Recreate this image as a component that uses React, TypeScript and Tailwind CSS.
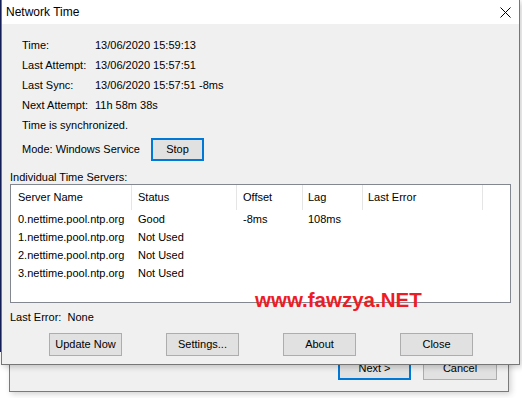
import React from "react";

const font = "font-['Liberation_Sans',Arial,sans-serif]";

function Btn({ label, focused = false, w = "w-[73px]" }: { label: string; focused?: boolean; w?: string }) {
  return (
    <div
      className={`${w} h-[23px] flex items-center justify-center bg-[#e1e1e1] text-[11px] text-black ${
        focused ? "border-2 border-[#0078d7]" : "border border-[#adadad]"
      }`}
    >
      {label}
    </div>
  );
}

const cols = [
  { w: "w-[121px]", pl: "pl-[7px]", title: "Server Name" },
  { w: "w-[105px]", pl: "pl-[6px]", title: "Status" },
  { w: "w-[66px]", pl: "pl-[6px]", title: "Offset" },
  { w: "w-[60px]", pl: "pl-[5px]", title: "Lag" },
  { w: "w-[120px]", pl: "pl-[5px]", title: "Last Error" },
];

const rows = [
  ["0.nettime.pool.ntp.org", "Good", "-8ms", "108ms", ""],
  ["1.nettime.pool.ntp.org", "Not Used", "", "", ""],
  ["2.nettime.pool.ntp.org", "Not Used", "", "", ""],
  ["3.nettime.pool.ntp.org", "Not Used", "", "", ""],
];

const info = [
  ["Time:", "13/06/2020 15:59:13"],
  ["Last Attempt:", "13/06/2020 15:57:51"],
  ["Last Sync:", "13/06/2020 15:57:51 -8ms"],
  ["Next Attempt:", "11h 58m 38s"],
];

export default function App() {
  return (
    <div className={`relative w-[522px] h-[398px] bg-white overflow-hidden ${font} text-black`}>
      {/* desktop strip on the left */}
      <div className="absolute left-0 top-0 w-[2px] h-[352px] bg-[#14205a]" />

      {/* window behind */}
      <div className="absolute left-[9px] top-[320px] w-[500px] h-[72px] bg-[#f0f0f0] border border-[#7a7a7a] shadow-[2px_2px_6px_rgba(0,0,0,0.18)] flex items-end justify-end pr-[11px] pb-[11px] gap-[12px]">
        <Btn label="Next >" focused />
        <Btn label="Cancel" w="w-[74px]" />
      </div>

      {/* dialog */}
      <div className="absolute left-[1px] top-0 w-[519px] bg-[#f0f0f0] border-l border-r border-b border-[#767676] shadow-[2px_2px_6px_rgba(0,0,0,0.2)] flex flex-col">
        <div className="h-[24px] bg-white flex items-center justify-between pl-[4px] pr-[8px]">
          <span className="text-[12px] leading-none">Network Time</span>
          <svg width="11" height="11" viewBox="0 0 11 11" className="block">
            <path d="M0.5 0.5 L10.5 10.5 M10.5 0.5 L0.5 10.5" stroke="#000" strokeWidth="1" />
          </svg>
        </div>

        <div className="pt-[11px] pl-[20px] flex flex-col text-[11px]">
          {info.map(([k, v]) => (
            <div key={k} className="h-[20px] flex items-center">
              <span className="w-[73px]">{k}</span>
              <span>{v}</span>
            </div>
          ))}
          <div className="h-[20px] flex items-center">Time is synchronized.</div>
          <div className="mt-[3px] h-[23px] flex items-center">
            <span className="w-[129px]">Mode: Windows Service</span>
            <Btn label="Stop" focused w="w-[53px]" />
          </div>
        </div>

        <div className="mt-[9px] pl-[8px] h-[14px] flex items-center text-[11px]">Individual Time Servers:</div>

        <div className="ml-[8px] w-[501px] h-[119px] bg-white border border-[#828790] flex flex-col text-[11px]">
          <div className="h-[25px] flex">
            {cols.map((c) => (
              <div key={c.title} className={`${c.w} ${c.pl} h-full flex items-center border-r border-[#e5e5e5]`}>
                {c.title}
              </div>
            ))}
          </div>
          {rows.map((r) => (
            <div key={r[0]} className="h-[18px] flex">
              {cols.map((c, i) => (
                <div key={c.title} className={`${c.w} ${c.pl} h-full flex items-center`}>
                  {r[i]}
                </div>
              ))}
            </div>
          ))}
        </div>

        <div className="mt-[7px] pl-[8px] h-[14px] flex items-center text-[11px] whitespace-pre">Last Error:  None</div>

        <div className="mt-[9px] mb-[8px] pl-[47px] flex gap-[44px]">
          <Btn label="Update Now" />
          <Btn label="Settings..." />
          <Btn label="About" />
          <Btn label="Close" />
        </div>
      </div>

      {/* watermark */}
      <div className="absolute left-[255px] top-[290px] text-[20.5px] font-bold leading-none text-[#ee1c25]">
        www.fawzya.NET
      </div>
    </div>
  );
}
